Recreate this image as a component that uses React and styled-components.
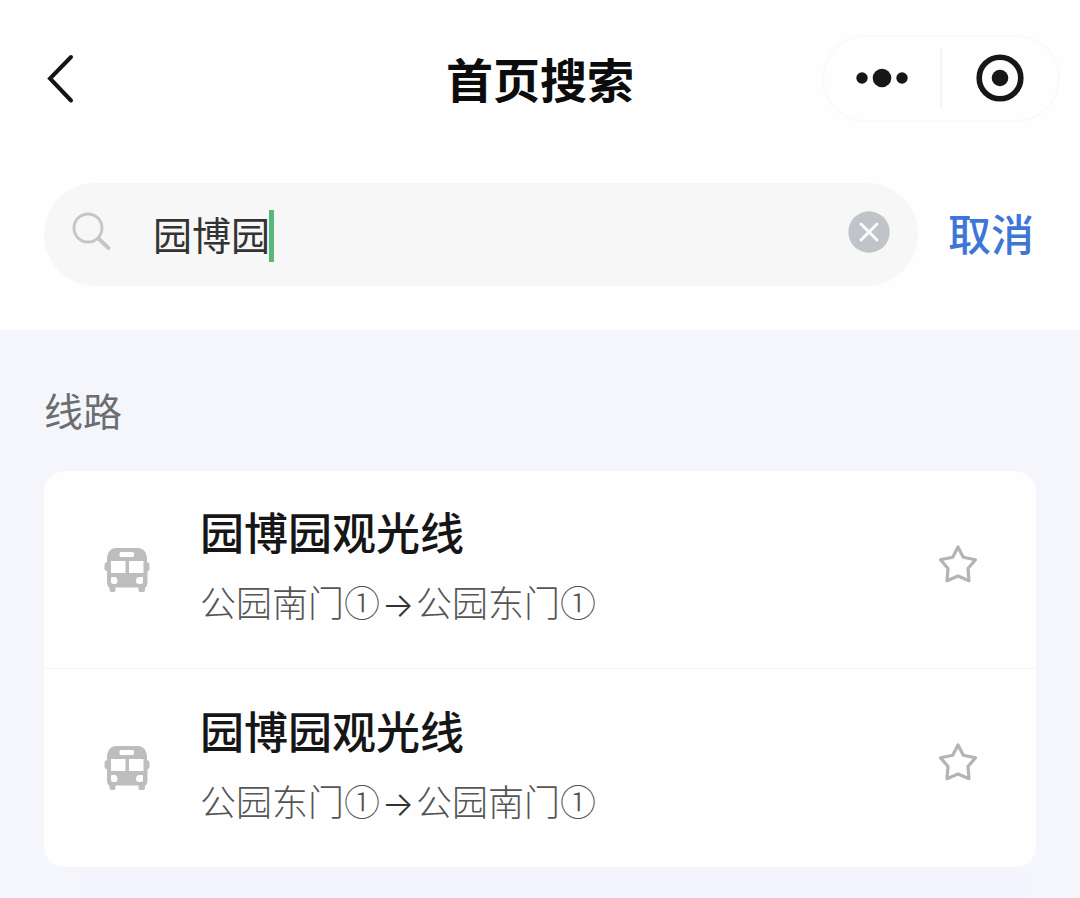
import React, { useState } from "react";
import styled, { createGlobalStyle } from "styled-components";

const GlobalStyle = createGlobalStyle`
  *, *::before, *::after { box-sizing: border-box; }
  html { background: #f4f6fb; }
  body {
    margin: 0;
    background: #f4f6fb;
    color: #171717;
    font-family: "Noto Sans CJK SC", "Noto Sans", sans-serif;
  }
  h1, h2, h3, p, ul { margin: 0; padding: 0; }
  button, input { font-family: inherit; }
  svg { display: block; }
`;

const Page = styled.div`
  min-height: 100vh;
  overflow: hidden;
`;

const TopArea = styled.header`
  background: #fefefe;
  padding: 35px 0 44px;
`;

const NavBar = styled.div`
  display: grid;
  grid-template-columns: 1fr auto 1fr;
  align-items: center;
  padding: 0 20px 0 40px;
`;

const PlainButton = styled.button`
  display: flex;
  align-items: center;
  justify-content: center;
  padding: 0;
  border: 0;
  background: none;
  color: inherit;
  cursor: pointer;
`;

const BackButton = styled(PlainButton)`
  width: 40px;
  height: 56px;
`;

const NavTitle = styled.h1`
  padding: 0 20px 2px 0;
  font-size: 47px;
  line-height: 64px;
  font-weight: 700;
  color: #0c0c0c;
`;

const Capsule = styled.div`
  justify-self: end;
  display: flex;
  align-items: center;
  height: 87px;
  width: 238px;
  padding-bottom: 2px;
  border: 2px solid #fafafa;
  border-radius: 44px;
`;

const CapsuleButton = styled(PlainButton)`
  flex: 1;
  height: 60px;

  & + & { border-left: 2px solid #f4f4f4; }
`;

const SearchRow = styled.form`
  display: flex;
  align-items: center;
  gap: 30px;
  margin-top: 61px;
  padding: 0 46px 0 44px;
`;

const SearchBox = styled.div`
  flex: 1;
  min-width: 0;
  display: flex;
  align-items: center;
  height: 103px;
  padding: 0 28px 6px;
  border-radius: 52px;
  background: #f7f7f7;
`;

const Field = styled.label`
  flex: 1;
  min-width: 0;
  display: flex;
  align-items: center;
  cursor: text;
`;

const SearchInput = styled.input`
  field-sizing: content;
  max-width: 90%;
  height: 56px;
  margin-left: 41px;
  padding: 2px 0 0;
  border: 0;
  outline: 0;
  background: none;
  color: #333;
  caret-color: transparent;
  font-size: 39px;
  line-height: 54px;
`;

const Caret = styled.span`
  width: 5px;
  height: 52px;
  margin-top: 8px;
  margin-left: -1px;
  background: #57b877;
`;

const CancelButton = styled(PlainButton)`
  padding-bottom: 6px;
  color: #3d76d6;
  font-size: 43px;
  line-height: 60px;
  font-weight: 500;
`;

const Results = styled.main`
  padding: 51px 44px 0;
`;

const SectionTitle = styled.h2`
  color: #6b6d70;
  font-size: 39px;
  line-height: 56px;
  font-weight: 400;
`;

const Card = styled.ul`
  margin-top: 34px;
  list-style: none;
  border-radius: 20px;
  background: #fefefe;
`;

const RouteRow = styled.li`
  display: flex;
  align-items: center;
  min-height: 197px;
  padding: 0 56px 0 60px;

  & + & {
    border-top: 1px solid #f4f4f5;
    min-height: 199px;
  }
`;

const RouteText = styled.div`
  flex: 1;
  min-width: 0;
  margin-left: 50px;
  padding-bottom: 11px;
`;

const RouteName = styled.h3`
  color: #161616;
  font-size: 44px;
  line-height: 64px;
  font-weight: 500;
`;

const RouteStops = styled.p`
  margin-top: 14px;
  color: #555;
  font-size: 36px;
  line-height: 48px;
  font-weight: 300;
`;

const Arrow = styled.span`
  display: inline-block;
  width: 36px;
  color: #333;
  font-family: Inter, "Noto Sans CJK SC", sans-serif;
  font-size: 34px;
  text-align: center;
`;

const StarButton = styled(PlainButton)`
  width: 44px;
  height: 44px;
  margin-bottom: 12px;
`;

const NextPanel = styled.div`
  height: 40px;
  margin: 6px 8px 0 36px;
  background: #f3f4fe;
`;

const BackIcon = () => (
  <svg width="40" height="56" viewBox="0 0 40 56" fill="none" stroke="#151515" strokeWidth="4" strokeLinecap="round">
    <path d="M31 6 L10 27.500 L31 49.500" />
  </svg>
);

const MoreIcon = () => (
  <svg width="56" height="24" viewBox="0 0 56 24" fill="#171717">
    <circle cx="8" cy="12" r="5.700" />
    <circle cx="28" cy="12" r="9.300" />
    <circle cx="48" cy="12" r="5.700" />
  </svg>
);

const TargetIcon = () => (
  <svg width="50" height="50" viewBox="0 0 50 50">
    <circle cx="25" cy="25" r="20.800" fill="none" stroke="#171717" strokeWidth="5.600" />
    <circle cx="25" cy="25" r="8.300" fill="#171717" />
  </svg>
);

const SearchIcon = () => (
  <svg width="40" height="40" viewBox="0 0 40 40" fill="none" stroke="#c4c5c8">
    <circle cx="16" cy="16" r="14" strokeWidth="2.800" />
    <path d="M26.500 26.500 L36.500 36" strokeWidth="3.800" strokeLinecap="round" />
  </svg>
);

const ClearIcon = () => (
  <svg width="42" height="42" viewBox="0 0 42 42">
    <circle cx="21" cy="21" r="20.700" fill="#c0c4c9" />
    <path d="M13 13 L29 29 M29 13 L13 29" stroke="#fafbfc" strokeWidth="3" strokeLinecap="round" />
  </svg>
);

const BusIcon = () => (
  <svg width="46" height="46" viewBox="0 0 46 46">
    <path
      fill="#bdbdbd"
      fillRule="evenodd"
      d="M11 1 H35 Q42 2 43 11 V15 Q45.500 15.500 45.500 18 V22 Q45.500 24 43.500 24 V36 Q43.500 39 41 41 V43 Q41 45 39 45 H36 Q34.500 45 34.500 43 V40.500 H11.500 V43 Q11.500 45 10 45 H7.500 Q5.500 45 5.500 43 V41 Q3 39 3 36 V24 Q0.500 24 0.500 22 V18 Q0.500 15.500 3 15 V11 Q4 2 11 1 Z
      M17 5 Q15.500 5 15.500 6.500 V8.500 Q15.500 10 17 10 H28.500 Q30 10 30 8.500 V6.500 Q30 5 28.500 5 Z
      M7 14 V26 H21.500 V14 Z M25 14 V26 H39.500 V14 Z
      M8 30 Q7 30 7 31 V35 Q7 37 9 37 H11 Q13.500 37 13.500 34 Q13.500 30 10.500 30 Z
      M38 30 H35.500 Q32 30 32 34 Q32 37 35 37 H37 Q39 37 39 35 V31 Q39 30 38 30 Z"
    />
  </svg>
);

const StarIcon = () => (
  <svg width="44" height="44" viewBox="0 0 44 44" fill="none" stroke="#b4b4b4" strokeWidth="3.200" strokeLinejoin="round">
    <path d="M22 5 L27.300 15.300 L39.500 17.700 L32 26.500 L33 38.700 L22 34 L11 38.700 L12 26.500 L4.500 17.700 L16.700 15.300 Z" />
  </svg>
);

const routes = [
  { name: "园博园观光线", from: "公园南门①", to: "公园东门①" },
  { name: "园博园观光线", from: "公园东门①", to: "公园南门①" },
];

export default function App() {
  const [query, setQuery] = useState("园博园");

  return (
    <Page>
      <GlobalStyle />
      <TopArea>
        <NavBar>
          <BackButton type="button" aria-label="返回"><BackIcon /></BackButton>
          <NavTitle>首页搜索</NavTitle>
          <Capsule>
            <CapsuleButton type="button" aria-label="更多"><MoreIcon /></CapsuleButton>
            <CapsuleButton type="button" aria-label="关闭"><TargetIcon /></CapsuleButton>
          </Capsule>
        </NavBar>
        <SearchRow onSubmit={(e) => e.preventDefault()}>
          <SearchBox>
            <Field>
              <SearchIcon />
              <SearchInput
                type="text"
                aria-label="搜索"
                value={query}
                onChange={(e) => setQuery(e.target.value)}
              />
              <Caret />
            </Field>
            <PlainButton type="button" aria-label="清除" onClick={() => setQuery("")}>
              <ClearIcon />
            </PlainButton>
          </SearchBox>
          <CancelButton type="button">取消</CancelButton>
        </SearchRow>
      </TopArea>
      <Results>
        <SectionTitle>线路</SectionTitle>
        <Card>
          {routes.map((route) => (
            <RouteRow key={route.from}>
              <BusIcon />
              <RouteText>
                <RouteName>{route.name}</RouteName>
                <RouteStops>{route.from}<Arrow>→</Arrow>{route.to}</RouteStops>
              </RouteText>
              <StarButton type="button" aria-label="收藏"><StarIcon /></StarButton>
            </RouteRow>
          ))}
        </Card>
        <NextPanel />
      </Results>
    </Page>
  );
}
